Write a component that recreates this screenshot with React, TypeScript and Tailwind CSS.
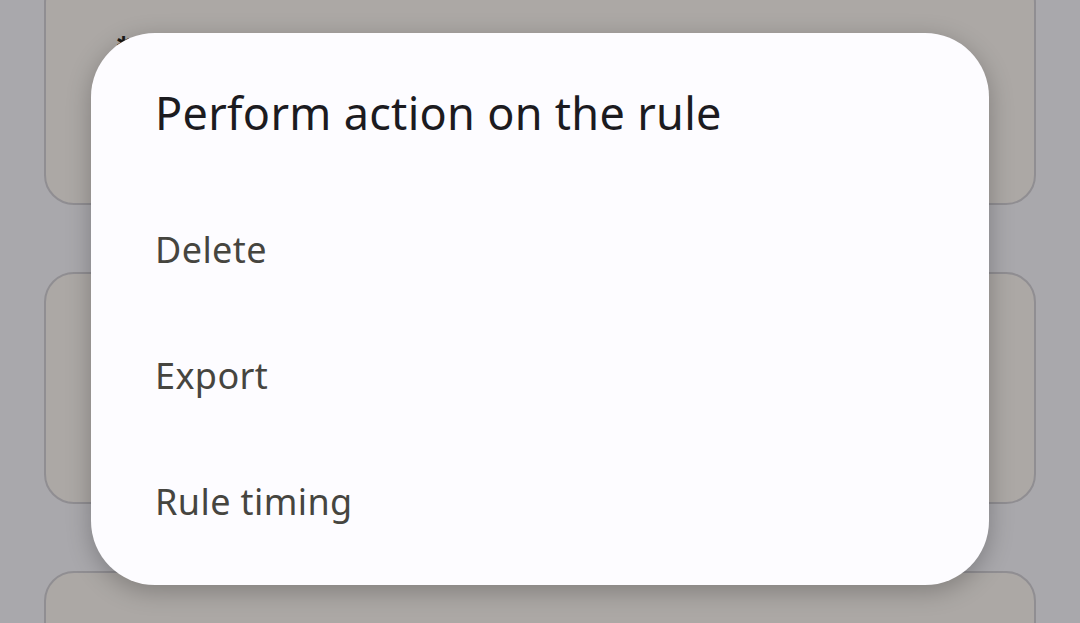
export default function App() {
  const items = ['Delete', 'Export', 'Rule timing'];

  return (
    <div className="relative h-[623px] w-[1080px] overflow-hidden bg-[#a9a8ac] font-['Noto_Sans',sans-serif]">
      {/* dimmed list behind the dialog */}
      <div className="flex flex-col gap-[67px] px-[44px] mt-[-27px]">
        <div className="relative h-[232px] rounded-[30px] border-2 border-[#908e92] bg-[#aca8a5]">
          <span className="absolute left-[70px] top-[58px] text-[18px] leading-none text-[#1a1a1a]">✱</span>
        </div>
        <div className="h-[232px] rounded-[30px] border-2 border-[#908e92] bg-[#aca8a5]" />
        <div className="h-[232px] rounded-[30px] border-2 border-[#908e92] bg-[#aca8a5]" />
      </div>

      {/* dialog */}
      <div className="absolute left-[91px] top-[33px] flex h-[552px] w-[898px] flex-col rounded-[64px] bg-[#fdfcff] px-[64px] pt-[50px] shadow-[0_6px_24px_rgba(0,0,0,0.25)]">
        <h1 className="text-[45px] leading-[60px] font-normal tracking-[0.3px] text-[#1c1b1f]">Perform action on the rule</h1>
        <div className="mt-[44px] flex flex-col">
          {items.map((item) => (
            <div key={item} className="flex h-[126px] items-center text-[36px] tracking-[0.4px] text-[#46453f]">
              {item}
            </div>
          ))}
        </div>
      </div>
    </div>
  );
}
